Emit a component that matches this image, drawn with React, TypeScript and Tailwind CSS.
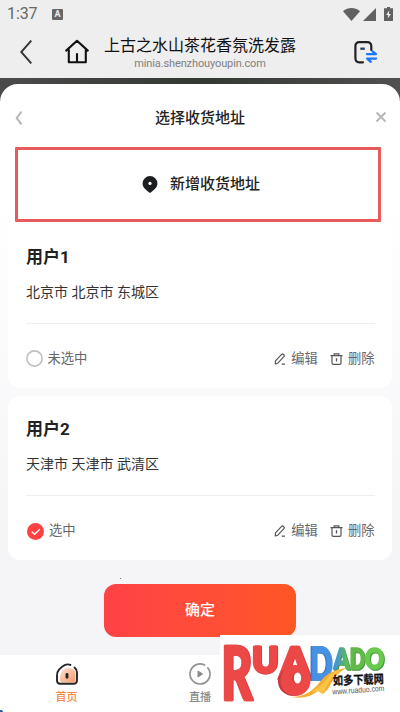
import React from 'react';

interface Address {
  name: string;
  region: string;
  selected: boolean;
}

const addresses: Address[] = [
  { name: '用户1', region: '北京市 北京市 东城区', selected: false },
  { name: '用户2', region: '天津市 天津市 武清区', selected: true },
];

const StatusBar: React.FC = () => (
  <div className="flex h-7 items-center pl-[7px] pr-[7px] text-[#666]">
    <span className="w-[45px] font-[Roboto] text-[16px] leading-none tracking-[-0.1px]">1:37</span>
    <span className="flex h-[11px] w-[11px] items-center justify-center rounded-[1px] bg-[#666] font-[Roboto] text-[9px] font-bold leading-none text-[#eee]">
      A
    </span>
    <svg className="ml-auto" width="17" height="13" viewBox="0 0 17 13" fill="#616161">
      <path d="M0 3.3C5 -1 12 -1 17 3.3L8.5 13Z" />
    </svg>
    <svg className="ml-[3px]" width="13" height="13" viewBox="0 0 13 13" fill="#616161">
      <path d="M13 0V13H0Z" />
    </svg>
    <svg className="ml-2" width="9" height="14" viewBox="0 0 9 14">
      <path d="M3 0H6V1.3H9V14H0V1.3H3Z" fill="#616161" />
      <path d="M5.2 3.5L2.2 8H4.1L3.8 11.5L6.9 6.9H5Z" fill="#eee" />
    </svg>
  </div>
);

const BrowserHeader: React.FC = () => (
  <div className="flex h-[50px] items-start">
    <svg className="ml-5 mt-[12px]" width="12" height="24" viewBox="0 0 12 24" fill="none" stroke="#333" strokeWidth="1.9">
      <path d="M11.3 .6L1.2 12L11.3 23.4" />
    </svg>
    <svg className="ml-[33px] mt-[11px]" width="24" height="25" viewBox="0 0 24 25" fill="none" stroke="#111" strokeWidth="2.1" strokeLinecap="round" strokeLinejoin="round">
      <path d="M1.2 11.6L12 1.8L22.8 11.6M3.8 11V23.3H20.8V11M12 15V23" />
    </svg>
    <div className="ml-[15px] flex w-[192px] flex-col items-center whitespace-nowrap">
      <span className="mt-[8px] text-[16px] leading-[20px] text-[#111]">上古之水山茶花香氛洗发露</span>
      <span className="mt-[1px] font-[Roboto] text-[11px] leading-[14px] tracking-[-0.12px] text-[#808080]">minia.shenzhouyoupin.com</span>
    </div>
    <svg className="ml-[58px] mt-[13px]" width="24" height="23" viewBox="0 0 24 23" fill="none">
      <path d="M17.3 9V5.2C17.3 2.7 15.8 1.2 13.3 1.2H5.3C2.8 1.2 1.4 2.7 1.4 5.2V17.3C1.4 19.8 2.8 21.3 5.3 21.3H9" stroke="#222" strokeWidth="2.2" strokeLinecap="round" />
      <path d="M6.3 7.7H10.8" stroke="#24405f" strokeWidth="2.3" />
      <path d="M13 13.1H22L18.5 10.4M22 17.6H13.2L16.8 20.8" stroke="#1677ff" strokeWidth="2.3" strokeLinecap="round" strokeLinejoin="round" />
    </svg>
  </div>
);

const EditIcon: React.FC = () => (
  <svg width="12" height="12" viewBox="0 0 12 12" fill="none" stroke="#555" strokeWidth="1.2" strokeLinejoin="round">
    <path d="M1.3 11L1.5 7.9L7.6 1.4Q8.5 .6 9.4 1.4L10 2Q10.7 2.8 9.9 3.7L3.8 10.2ZM7.7 11.1H11" />
  </svg>
);

const TrashIcon: React.FC = () => (
  <svg width="13" height="12" viewBox="0 0 13 12" fill="none" stroke="#555" strokeWidth="1.2">
    <path d="M.5 2.7H12.5M4.2 2.5V.9H8.8V2.5M2 2.7V10Q2 11.3 3.3 11.3H9.7Q11 11.3 11 10V2.7" />
    <path d="M6.5 5.2V8.5" strokeWidth="1.3" />
  </svg>
);

const AddressCard: React.FC<{ address: Address }> = ({ address }) => (
  <div className="flex h-[164px] flex-col rounded-[12px] bg-white pl-[18px] pr-[17px]">
    <h2 className="mt-[20px] text-[17px] font-bold leading-[26px] text-[#222]">{address.name}</h2>
    <p className="mt-[12px] whitespace-nowrap text-[14px] leading-[20px] text-[#333]">{address.region}</p>
    <div className="mt-[21px] h-px bg-[#efeff1]" />
    <div className="mt-[25px] flex h-[20px] items-center whitespace-nowrap text-[13.3px] leading-[20px] text-[#666]">
      {address.selected ? (
        <svg className="ml-[0.5px] mr-[5.5px]" width="17" height="17" viewBox="0 0 17 17">
          <circle cx="8.5" cy="8.5" r="8.5" fill="#ff4142" />
          <path d="M4.8 8.7L7.6 11.3L12.8 6.2" fill="none" stroke="#fff" strokeWidth="1.3" />
        </svg>
      ) : (
        <svg className="-mt-px mr-[4.5px]" width="17" height="17" viewBox="0 0 17 17" fill="none" stroke="#bfc0c3" strokeWidth="1.6">
          <circle cx="8.5" cy="8.5" r="7.6" />
        </svg>
      )}
      <span>{address.selected ? '选中' : '未选中'}</span>
      <span className="ml-auto flex items-center gap-[5px]">
        <EditIcon />
        编辑
      </span>
      <span className="ml-[12px] mr-[0.5px] flex items-center gap-[5px]">
        <TrashIcon />
        删除
      </span>
    </div>
  </div>
);

const AddressSheet: React.FC = () => (
  <div className="relative flex h-[571px] flex-col rounded-t-[18px] bg-linear-to-b from-white from-20% to-[#f5f5f8] to-80%">
    <div className="flex h-[63px] items-center pl-[15px] pr-[13px] pt-[4px]">
      <svg width="8" height="14" viewBox="0 0 8 14" fill="none" stroke="#b5b5b5" strokeWidth="2">
        <path d="M6.5 .7L1.7 7L6.5 13.3" />
      </svg>
      <h1 className="flex-1 pl-[2px] text-center text-[15px] font-medium leading-[22px] text-[#222]">选择收货地址</h1>
      <svg className="-mt-[2px]" width="12" height="12" viewBox="0 0 12 12" fill="none" stroke="#b5b5b5" strokeWidth="1.8">
        <path d="M1.5 1.5L10.5 10.5M10.5 1.5L1.5 10.5" />
      </svg>
    </div>
    <button className="ml-[15px] flex h-[75px] w-[366px] items-center justify-center gap-[12px] rounded-[1px] border-3 border-[#e95b5b] bg-white pl-[6px] text-[15px] font-medium text-[#222]">
      <svg width="16" height="17" viewBox="0 0 16 17">
        <path d="M8 0A7.4 7.4 0 0 1 15.4 7.4C15.4 11.2 12 14 8.8 16.4Q8 17 7.2 16.4C4 14 .6 11.2 .6 7.4A7.4 7.4 0 0 1 8 0Z" fill="#1d1e20" />
        <circle cx="8" cy="7.4" r="1.6" fill="#fff" />
      </svg>
      新增收货地址
    </button>
    <div className="mt-[2px] flex flex-col gap-[8px] px-[8px]">
      {addresses.map((address) => (
        <AddressCard key={address.name} address={address} />
      ))}
    </div>
    <button className="mx-auto mt-[24px] h-[53px] w-[192px] rounded-[12px] bg-linear-to-r from-[#ff4246] to-[#ff5624] text-[15px] font-medium text-white">
      确定
    </button>
    <span className="absolute left-[120px] top-[494px] h-px w-px bg-[#4b8a7b]" />
  </div>
);

const TabBar: React.FC = () => (
  <div className="flex h-[57px] bg-white text-[11px] leading-[16px]">
    <div className="flex w-[133px] flex-col items-center pt-[8px] text-[#f58a3c]">
      <svg width="22" height="22" viewBox="0 0 22 22" fill="none">
        <defs>
          <linearGradient id="homeFill" x1="0" y1="0" x2="1" y2="1">
            <stop offset="0" stopColor="#ffe0cf" />
            <stop offset="1" stopColor="#f69a6e" />
          </linearGradient>
        </defs>
        <path d="M4 14Q5 5 13 5Q19 5 19.5 11V19.5H5Q3.5 18 4 14Z" fill="url(#homeFill)" />
        <path d="M14.4 1.9Q10.5 .3 6.5 3.4L3.2 6.4Q.9 9 1 13V17.5Q1 20.8 4.3 20.8H17.5Q21 20.8 21 17.3V9.4Q21 6.5 18.5 4.5" stroke="#252525" strokeWidth="1.9" strokeLinecap="round" />
        <path d="M11 11.3V14.3" stroke="#222" strokeWidth="2.8" strokeLinecap="round" />
      </svg>
      <span className="mt-[5px] font-medium">首页</span>
    </div>
    <div className="flex w-[134px] flex-col items-center pt-[8px] text-[#888]">
      <svg width="22" height="22" viewBox="0 0 22 22" fill="none">
        <path d="M15.6 2.1A10 10 0 1 0 20.8 8.9Q20.3 6.7 18.9 4.9" stroke="#929292" strokeWidth="1.7" strokeLinecap="round" />
        <path d="M9 8L13.6 11L9 14Z" fill="#8a8a8a" stroke="#8a8a8a" strokeLinejoin="round" />
      </svg>
      <span className="mt-[5px] font-medium">直播</span>
    </div>
  </div>
);

const SiteLogo: React.FC = () => (
  <div className="absolute bottom-0 right-0 h-[77px] w-[180px] bg-white">
    <svg width="180" height="77" viewBox="0 0 180 77" fontFamily="Lato, 'Liberation Sans', sans-serif">
      <defs>
        <linearGradient id="tealGreen">
          <stop offset="0.2" stopColor="#4595d6" />
          <stop offset="0.8" stopColor="#5dbb55" />
        </linearGradient>
      </defs>
      <g fontWeight="900" strokeLinejoin="round">
        <g className="drop-shadow-[1px_0px_0_#d43f41]" fill="#ec4848" stroke="#ec4848">
          <text x="1" y="65" fontSize="74" textLength="31" lengthAdjust="spacingAndGlyphs" strokeWidth="2.5">R</text>
          <text x="32" y="38" fontSize="36" textLength="26" lengthAdjust="spacingAndGlyphs" strokeWidth="3">U</text>
          <text x="59" y="44" fontSize="43" textLength="31" lengthAdjust="spacingAndGlyphs" strokeWidth="2.5">A</text>
        </g>
        <g className="drop-shadow-[-1px_0px_0_#2d70ba]" fill="#4691e3" stroke="#4691e3">
          <text x="90" y="45" fontSize="45" textLength="23" lengthAdjust="spacingAndGlyphs" strokeWidth="2">D</text>
        </g>
        <g className="drop-shadow-[1px_1px_0_#42983a]" strokeWidth="1.6">
          <text x="113.5" y="34" fontSize="28" textLength="16" lengthAdjust="spacingAndGlyphs" fill="url(#tealGreen)" stroke="url(#tealGreen)">A</text>
          <text x="129.5" y="34" fontSize="28" textLength="15.5" lengthAdjust="spacingAndGlyphs" fill="#62ba4a" stroke="#62ba4a">D</text>
          <text x="145" y="33.5" fontSize="28" textLength="19" lengthAdjust="spacingAndGlyphs" fill="#6aca50" stroke="#6aca50">O</text>
        </g>
      </g>
      <path d="M71 62Q88 62 99 48Q108 35 126 33Q115 39 108 54L103 59L98 56Q87 65 71 62Z" fill="#f5ae2b" />
      <path d="M91 57Q104 50 109 41Q115 35 122 34Q109 43 103 59L98 56Z" fill="#fac449" />
      {/* ring that closes the first A into a drop */}
      <ellipse cx="73.5" cy="46.5" rx="15.5" ry="14.5" fill="#c9393c" />
      <ellipse cx="75.5" cy="45.5" rx="10" ry="10.5" fill="none" stroke="#ec4848" strokeWidth="10" />
      <ellipse cx="75.5" cy="44.5" rx="6" ry="7" fill="#ec4848" />
      <ellipse cx="76.5" cy="43" rx="4.2" ry="5.8" fill="#c9393c" />
      <ellipse cx="77.5" cy="43" rx="3.7" ry="5.6" fill="#fff" />
      <text x="113" y="50" fontFamily="'Noto Sans CJK SC', sans-serif" fontSize="12" fontWeight="700" textLength="51" lengthAdjust="spacingAndGlyphs" fill="#111" stroke="#111" strokeWidth=".3" transform="rotate(-2 113 50)">
        如多下载网
      </text>
      <text x="112.5" y="59.5" fontFamily="'Liberation Sans', sans-serif" fontSize="8" textLength="52" lengthAdjust="spacingAndGlyphs" fill="#555" transform="rotate(-4 113 59)">
        www.ruaduo.com
      </text>
    </svg>
  </div>
);

export default function App() {
  return (
    <div className="relative h-[712px] w-[400px] overflow-hidden bg-[#eee] font-[Roboto,'Noto_Sans_CJK_SC',sans-serif]">
      <StatusBar />
      <BrowserHeader />
      <div className="bg-[#464744] bg-linear-to-r from-[#4b4b4b] via-[#333832] to-[#505050] pt-[6px]">
        <AddressSheet />
      </div>
      <TabBar />
      <SiteLogo />
      <span className="absolute bottom-0 left-0 h-[2px] w-[3px] rounded-tr-[2px] bg-[#285f9b]" />
    </div>
  );
}
